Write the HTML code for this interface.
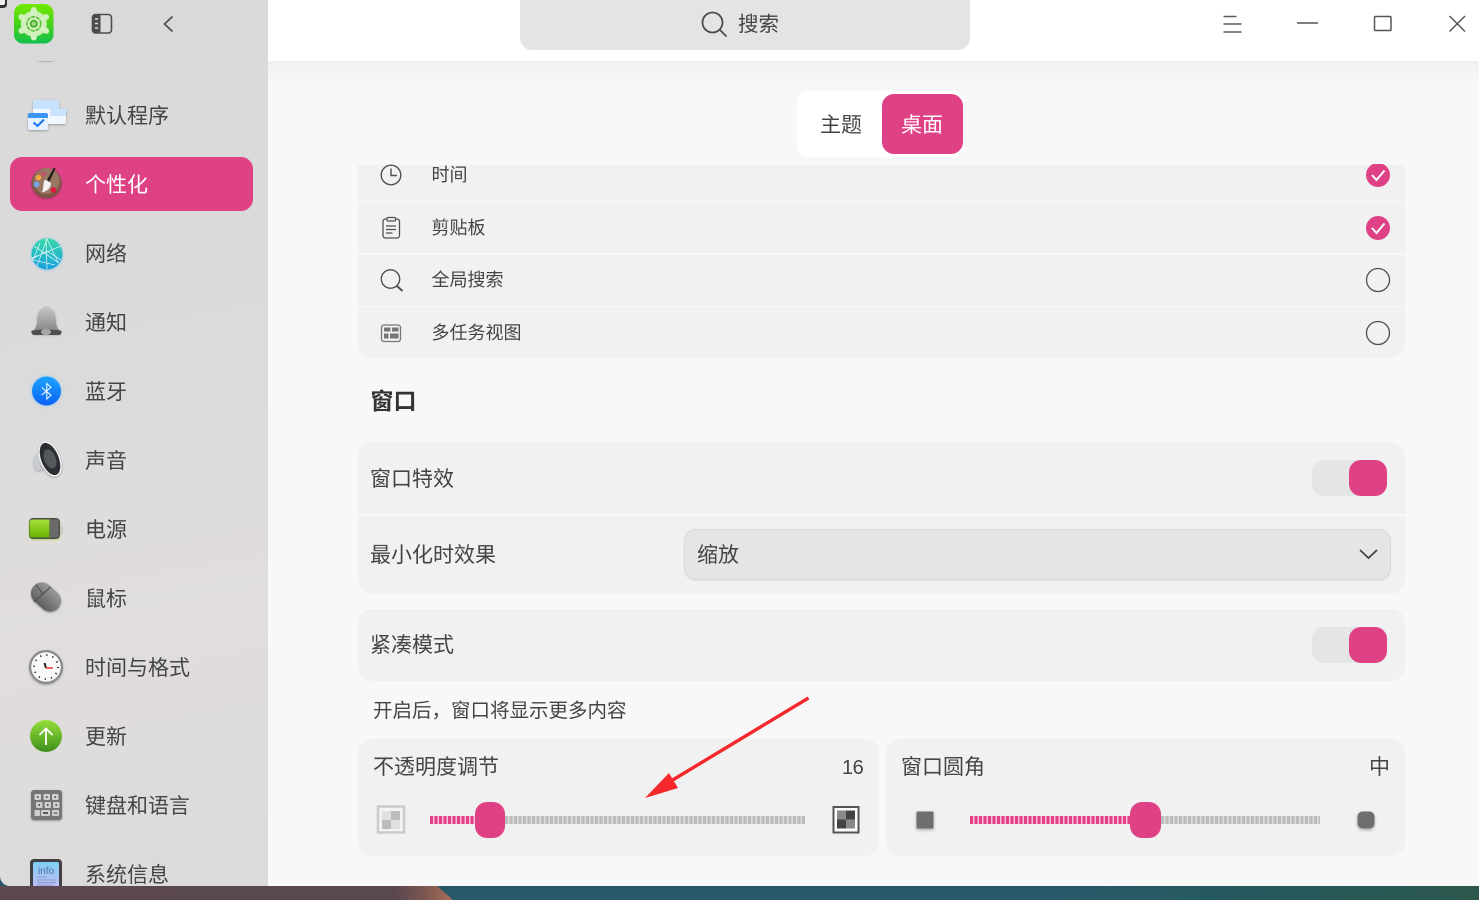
<!DOCTYPE html>
<html lang="zh"><head><meta charset="utf-8"><title>设置</title>
<style>
*{margin:0;padding:0;box-sizing:border-box}
html,body{width:1479px;height:900px;overflow:hidden;background:#28596b}
body{position:relative;font-family:"Liberation Sans","Noto Sans CJK SC",sans-serif;color:#444}
.a{position:absolute}
.t{position:absolute;white-space:nowrap;line-height:30px;height:30px}
.side{left:0;top:0;width:268px;height:886px;background:linear-gradient(170deg,#d9d9d9 0%,#dcdbdb 45%,#e1dddd 70%,#dcdada 100%);border-bottom-left-radius:10px;overflow:hidden}
.s{left:85px;font-size:21px;color:#444}
.main{left:268px;top:0;width:1211px;height:886px;background:#f8f8f8}
.panel{position:absolute;background:#f1f1f1}
.line{position:absolute;background:#f8f8f8}
.sw{position:absolute;left:1312px;width:75px;height:36px;background:#e5e5e5;border-radius:12px}
.sw i{position:absolute;right:0;top:0;width:38px;height:36px;background:#df4186;border-radius:12px}
.c{font-size:21px;color:#444}
.r{font-size:18px;color:#444;left:431.500px}
.tick{position:absolute;height:8px;top:816px}
.th{position:absolute;top:802px;height:36px;background:#df4186;border-radius:12px}
svg{position:absolute;overflow:visible}
</style></head><body>
<div class="a" style="left:0;top:886px;width:1479px;height:14px;background:linear-gradient(90deg,#5b4850 0%,#5a4850 395px,#7c5650 425px,#a86c58 450px)"></div>
<div class="a" style="left:0;top:886px;width:1479px;height:14px;clip-path:polygon(437px 0,100% 0,100% 100%,453px 100%);background:linear-gradient(90deg,#28596b 0%,#28596b 70%,#265a5e 85%,#2c574c 100%)"></div>

<div class="a side">
<div class="a" style="left:10px;top:157px;width:243px;height:54px;background:#de4285;border-radius:12px"></div>

<div class="t s" style="top:102px">默认程序</div>
<div class="t s" style="top:171px;color:#fff">个性化</div>
<div class="t s" style="top:240px">网络</div>
<div class="t s" style="top:309px">通知</div>
<div class="t s" style="top:378px">蓝牙</div>
<div class="t s" style="top:447px">声音</div>
<div class="t s" style="top:516px">电源</div>
<div class="t s" style="top:585px">鼠标</div>
<div class="t s" style="top:654px">时间与格式</div>
<div class="t s" style="top:723px">更新</div>
<div class="t s" style="top:792px">键盘和语言</div>
<div class="t s" style="top:861px">系统信息</div>

<svg width="268" height="886" viewBox="0 0 268 886" style="left:0;top:0">
<defs>
<linearGradient id="g1" x1="0" y1="0" x2="0" y2="1"><stop offset="0" stop-color="#72e800"/><stop offset=".6" stop-color="#3fcf20"/><stop offset="1" stop-color="#12c050"/></linearGradient>
<radialGradient id="gear" cx=".5" cy=".5" r=".5"><stop offset="0" stop-color="#e8f7d8"/><stop offset="1" stop-color="#c4edb0"/></radialGradient>
<linearGradient id="net" x1="0" y1="0" x2="0" y2="1"><stop offset="0" stop-color="#35d9a8"/><stop offset="1" stop-color="#1c9fe0"/></linearGradient>
<linearGradient id="bl" x1="0" y1="0" x2="0" y2="1"><stop offset="0" stop-color="#1fa4ff"/><stop offset="1" stop-color="#0a62f5"/></linearGradient>
<linearGradient id="bell" x1="0" y1="0" x2="0" y2="1"><stop offset="0" stop-color="#c8c8c8"/><stop offset="1" stop-color="#808080"/></linearGradient>
<linearGradient id="up" x1="0" y1="0" x2="0" y2="1"><stop offset="0" stop-color="#96df3c"/><stop offset="1" stop-color="#3d8f1c"/></linearGradient>
<linearGradient id="ms" x1="0" y1="0" x2="0" y2="1"><stop offset="0" stop-color="#9a9a9a"/><stop offset="1" stop-color="#5e5e5e"/></linearGradient>
<linearGradient id="inf" x1="0" y1="0" x2="0" y2="1"><stop offset="0" stop-color="#7fd0f5"/><stop offset="1" stop-color="#c4bcf5"/></linearGradient>
<linearGradient id="bat" x1="0" y1="0" x2="0" y2="1"><stop offset="0" stop-color="#a7df3c"/><stop offset="1" stop-color="#68b400"/></linearGradient>
<filter id="sh" x="-30%" y="-30%" width="160%" height="160%"><feDropShadow dx="0" dy="1" stdDeviation="1" flood-color="#000" flood-opacity=".3"/></filter>
<filter id="gb" x="-30%" y="-30%" width="160%" height="160%"><feDropShadow dx="0" dy="0" stdDeviation="1.500" flood-color="#3fb4ff" flood-opacity=".6"/></filter>
<filter id="gg" x="-30%" y="-30%" width="160%" height="160%"><feDropShadow dx="0" dy="1" stdDeviation="1" flood-color="#a8cf40" flood-opacity=".7"/></filter>
</defs>

<!-- app icon -->
<rect x="14" y="4" width="39.500" height="39.500" rx="9" fill="url(#g1)"/>
<g fill="url(#gear)"><circle cx="33.800" cy="23.800" r="13"/><g stroke="#d3f1bf" stroke-width="6" stroke-linecap="round"><path d="M33.800 10v27.500M21.500 17l24.600 13.800M21.500 30.800L46.100 17"/></g></g>
<circle cx="33.800" cy="23.800" r="7" fill="none" stroke="#58bf3a" stroke-width="1.600" stroke-dasharray="4 1"/>
<circle cx="33.800" cy="23.800" r="4" fill="#48b52c"/>
<circle cx="33.800" cy="23.800" r="2" fill="#9fdb84"/>
<!-- topleft corner -->
<path d="M0 0H7V4Q7 8 3 8H0Z" fill="#333"/>
<path d="M0 0H5V3Q5 5 3 5H0Z" fill="#eee"/>
<!-- sidebar toggle -->
<rect x="92.500" y="14.500" width="19" height="18.500" rx="3" fill="none" stroke="#4d4d4d" stroke-width="1.600"/>
<path d="M95 14.500h5.500v18.500H95a2.500 2.500 0 0 1-2.500-2.500V17a2.500 2.500 0 0 1 2.500-2.500z" fill="#4d4d4d"/>
<path d="M95 19h3M95 23.500h3M95 28h3" stroke="#ddd" stroke-width="1.600"/>
<!-- back -->
<path d="M172.500 16.500L164.500 24L172.500 31.500" fill="none" stroke="#4d4d4d" stroke-width="1.700"/>
<!-- partial scrolled icon -->
<path d="M36 61Q46 64 56 61Z" fill="#b5b5b5"/>

<!-- default apps -->
<g filter="url(#sh)">
<rect x="33" y="100" width="26" height="24" rx="2" fill="#f4f9ff"/><path d="M33 102a2 2 0 0 1 2-2h22a2 2 0 0 1 2 2v7H33z" fill="#c6e2fe"/>
<rect x="50" y="109" width="16" height="15" rx="2" fill="#f0f7ff"/><path d="M50 111a2 2 0 0 1 2-2h12a2 2 0 0 1 2 2v5H50z" fill="#c9e3fd"/>
<rect x="28" y="113" width="20" height="17" rx="2" fill="#e6f2ff"/><path d="M28 115a2 2 0 0 1 2-2h16a2 2 0 0 1 2 2v3H28z" fill="#3e95f4"/>
</g>
<path d="M33.500 122.500l4 3.500 6.500-6.500" fill="none" stroke="#1677ec" stroke-width="2"/>

<!-- palette -->
<g filter="url(#sh)"><circle cx="46.500" cy="183" r="15" fill="#7e5845"/></g>
<circle cx="46.500" cy="181" r="13" fill="#9a7764"/>
<circle cx="38.500" cy="177.500" r="2.800" fill="#f0a93c"/><circle cx="43.500" cy="174" r="2.800" fill="#b85a68"/><circle cx="36.500" cy="184.500" r="2.800" fill="#6fa8ef"/><circle cx="53.500" cy="190" r="2.800" fill="#e0143c"/>
<path d="M45 179.500l6 3.500c0 4.500-3.500 8.500-9.500 9.500 2.500-3 1-9.500 3.500-13z" fill="#f2f2f2"/>
<path d="M47 180l7-12.500 1.500 1-6 13z" fill="#1d1d1d"/>

<!-- network -->
<g filter="url(#gb)"><circle cx="47" cy="254" r="15.500" fill="url(#net)"/></g>
<g fill="none" stroke="#fff" stroke-width=".8" opacity=".8"><path d="M46 239l1 30M34 246l25 17M32 258l29-12M37 266l10-27 11 23M47 251l-15 8M47 251l14 9M40 243l-7 17 22 5"/></g>

<!-- bell -->
<g filter="url(#sh)"><path d="M46.500 306c2 0 2.500 1 2.500 1.800 5 1.500 6.500 6 6.800 12.500.2 5 1.200 8 4.700 11 .8 1.500-.5 2.700-3 2.700H35.500c-2.500 0-3.800-1.200-3-2.700 3.500-3 4.500-6 4.700-11 .3-6.500 1.800-11 6.800-12.500 0-.8.500-1.800 2.500-1.800z" fill="url(#bell)"/></g>
<path d="M31.500 331c3-2 27-2 30 0 .5 2.500-1 4-3 4H34.500c-2 0-3.500-1.500-3-4z" fill="#4f4f4f"/>
<ellipse cx="46" cy="332" rx="5" ry="3.200" fill="#a5a5a5"/>

<!-- bluetooth -->
<g filter="url(#gb)"><circle cx="46.500" cy="391" r="14.500" fill="url(#bl)"/></g>
<path d="M41.800 387.500l9.200 7.700-4.200 3.800v-15.500l4.200 3.800-9.200 7.700" fill="none" stroke="#fff" stroke-width="1"/>

<!-- speaker -->
<g filter="url(#sh)">
<ellipse cx="39" cy="462" rx="5.500" ry="8.500" fill="#c8ccd0"/>
<path d="M41 443L57 473L40 468Z" fill="#b9bcc0"/>
<ellipse cx="50" cy="459" rx="10" ry="18.500" transform="rotate(-22 50 459)" fill="#f4f4f4"/>
<ellipse cx="50" cy="459" rx="8.700" ry="17" transform="rotate(-22 50 459)" fill="#2a2d31"/>
<ellipse cx="50" cy="459" rx="5.700" ry="10" transform="rotate(-22 50 459)" fill="#55595d"/>
</g>

<!-- battery -->
<path d="M59 526h2a2 2 0 0 1 2 2v5a2 2 0 0 1-2 2h-2z" fill="#ccc"/>
<g filter="url(#gg)"><rect x="29" y="518" width="31" height="21" rx="4" fill="#4f4f4f"/></g>
<path d="M32.500 519.500h17v18h-17a3 3 0 0 1-3-3v-12a3 3 0 0 1 3-3z" fill="url(#bat)"/>
<path d="M50 519.500h6a2.500 2.500 0 0 1 2.500 2.500v13a2.500 2.500 0 0 1-2.500 2.500h-6z" fill="#6a6a6a"/>

<!-- mouse -->
<g filter="url(#sh)"><rect x="29.500" y="586" width="33" height="22" rx="11" transform="rotate(42 46 597)" fill="url(#ms)"/></g>
<path d="M33.800 602l17-15M36 585l7 9" stroke="#4a4a4a" stroke-width="1" fill="none"/>

<!-- clock -->
<g filter="url(#sh)"><circle cx="46" cy="667" r="17" fill="#8a8a8a"/></g>
<circle cx="46" cy="667" r="14.800" fill="#fafafa"/>
<circle cx="46" cy="667" r="12" fill="none" stroke="#333" stroke-width="2" stroke-dasharray="1.200 5.080"/>
<path d="M44.500 663l1.500 5" stroke="#222" stroke-width="2"/><path d="M46 668h7" stroke="#ef4444" stroke-width="1.600"/>

<!-- update -->
<circle cx="46" cy="736" r="16" fill="url(#up)"/>
<path d="M46 745V729M39.500 735l6.500-6.500 6.500 6.500" stroke="#fff" stroke-width="1.800" fill="none"/>

<!-- keyboard -->
<g filter="url(#sh)"><rect x="31" y="790" width="31" height="30" rx="3" fill="#757575"/></g>
<g fill="#cfcfcf">
<rect x="34.500" y="794" width="6.500" height="6" rx="1"/><rect x="43.500" y="794" width="6.500" height="6" rx="1"/><rect x="52" y="794" width="6.500" height="6" rx="1"/>
<rect x="36" y="802" width="6.500" height="6" rx="1"/><rect x="44.500" y="802" width="6.500" height="6" rx="1"/><rect x="53" y="802" width="6.500" height="6" rx="1"/>
<rect x="34.500" y="810" width="5.500" height="6" rx="1"/><rect x="41" y="810" width="9" height="6" rx="1"/><rect x="52" y="810" width="7" height="6" rx="1"/></g>
<g fill="#5a5a5a"><rect x="37" y="796" width="1.500" height="2"/><rect x="46" y="796" width="1.500" height="2"/><rect x="54.500" y="796" width="1.500" height="2"/><rect x="38.500" y="804" width="1.500" height="2"/><rect x="47" y="804" width="1.500" height="2"/><rect x="55.500" y="804" width="1.500" height="2"/><rect x="43" y="812" width="5" height="2"/><rect x="53.500" y="812.500" width="4" height="1.200"/></g>

<!-- info -->
<rect x="30" y="859" width="32" height="30" rx="4" fill="#3f3f45"/>
<rect x="33" y="862" width="26" height="26" rx="2" fill="url(#inf)"/>
<text x="46" y="874" font-size="10" fill="#53719c" text-anchor="middle" font-family="Liberation Sans">info</text>
<path d="M37 877h10M37 880h19M37 882.500h19M37 885h16" stroke="#7e8fc0" stroke-width=".8"/>
</svg>
</div>

<div class="a main" style="background:linear-gradient(#f0f0f0 61px,#f8f8f8 85px)"></div>
<div class="a" style="left:268px;top:0;width:1211px;height:61px;background:#fff"></div>
<div class="a" style="left:520px;top:0;width:450px;height:50px;background:#e4e4e4;border-radius:0 0 12px 12px"></div>
<div class="t" style="left:738px;top:10px;font-size:20.500px;color:#444">搜索</div>

<div class="a" style="left:797px;top:91px;width:166px;height:66px;background:#fff;border-radius:12px"></div>
<div class="a" style="left:881.500px;top:94px;width:81px;height:60px;background:#df4186;border-radius:12px"></div>
<div class="t" style="left:820px;top:111px;font-size:21px;color:#444">主题</div>
<div class="t" style="left:901px;top:111px;font-size:21px;color:#fff">桌面</div>

<!-- list panel -->
<div class="panel" style="left:358px;top:165px;width:1047px;height:193px;border-radius:0 0 14px 14px"></div>
<div class="line" style="left:358px;top:201px;width:1047px;height:1px"></div>
<div class="line" style="left:358px;top:253px;width:1047px;height:2px"></div>
<div class="line" style="left:358px;top:306px;width:1047px;height:1px"></div>
<div class="t r" style="top:160px">时间</div>
<div class="t r" style="top:213px">剪贴板</div>
<div class="t r" style="top:265px">全局搜索</div>
<div class="t r" style="top:318px">多任务视图</div>

<div class="t" style="left:370.500px;top:386px;font-size:23px;font-weight:700;color:#333">窗口</div>

<!-- window panel -->
<div class="panel" style="left:358px;top:442px;width:1047px;height:152px;border-radius:14px"></div>
<div class="line" style="left:358px;top:514px;width:1047px;height:2px"></div>
<div class="t c" style="left:370px;top:465px">窗口特效</div>
<div class="sw" style="top:460px"><i></i></div>
<div class="t c" style="left:370px;top:541px">最小化时效果</div>
<div class="a" style="left:684px;top:529px;width:707px;height:51px;background:#e5e5e5;border-radius:12px;border:1px solid #d8d8d8;box-shadow:0 1px 1px #e2e2e2"></div>
<div class="t c" style="left:697px;top:541px">缩放</div>

<div class="panel" style="left:358px;top:609px;width:1047px;height:72px;border-radius:14px"></div>
<div class="t c" style="left:370px;top:631px">紧凑模式</div>
<div class="sw" style="top:627px"><i></i></div>

<div class="t" style="left:373px;top:696px;font-size:19.500px;color:#444">开启后，窗口将显示更多内容</div>

<div class="panel" style="left:358px;top:739px;width:520.500px;height:117px;border-radius:14px"></div>
<div class="panel" style="left:886px;top:739px;width:519px;height:117px;border-radius:14px"></div>
<div class="t c" style="left:373px;top:753px">不透明度调节</div>
<div class="t c" style="left:842px;top:753px;font-size:20px;letter-spacing:-.5px">16</div>
<div class="t c" style="left:901px;top:753px">窗口圆角</div>
<div class="t c" style="left:1369px;top:753px">中</div>

<div class="tick" style="left:430px;width:45px;background:repeating-linear-gradient(90deg,#e04187 0 3px,#f6c0d8 3px 4.500px)"></div>
<div class="tick" style="left:505px;width:300px;background:repeating-linear-gradient(90deg,#bcbcbc 0 3px,#dedede 3px 4.500px)"></div>
<div class="th" style="left:475px;width:30px"></div>
<div class="tick" style="left:970px;width:160px;background:repeating-linear-gradient(90deg,#e04187 0 3px,#f6c0d8 3px 4.500px)"></div>
<div class="tick" style="left:1161px;width:159px;background:repeating-linear-gradient(90deg,#bcbcbc 0 3px,#dedede 3px 4.500px)"></div>
<div class="th" style="left:1130px;width:31px"></div>

<svg width="1479" height="900" viewBox="0 0 1479 900" style="left:0;top:0">
<defs><filter id="s2" x="-40%" y="-40%" width="180%" height="180%"><feDropShadow dx="0" dy="1.500" stdDeviation="1.500" flood-color="#000" flood-opacity=".3"/></filter></defs>
<!-- titlebar -->
<circle cx="712.500" cy="22.500" r="10" fill="none" stroke="#4d4d4d" stroke-width="1.800"/>
<path d="M720 30l6.500 6.500" stroke="#4d4d4d" stroke-width="1.800"/>
<path d="M1223.500 16.500h13M1223.500 24h18M1223.500 32h18" stroke="#5a5a5a" stroke-width="1.500" fill="none"/>
<path d="M1297 23h21" stroke="#555" stroke-width="1.500"/>
<rect x="1374.500" y="16.500" width="16.500" height="14" rx="1" fill="none" stroke="#555" stroke-width="1.500"/>
<path d="M1449.500 16l15.500 15.500M1465 16l-15.500 15.500" stroke="#555" stroke-width="1.500"/>

<!-- list icons -->
<circle cx="391" cy="175" r="9.800" fill="none" stroke="#4f4f4f" stroke-width="1.400"/>
<path d="M391 168.500v7h6" fill="none" stroke="#4f4f4f" stroke-width="1.400"/>
<rect x="383" y="219" width="16.500" height="19" rx="2.500" fill="none" stroke="#4f4f4f" stroke-width="1.300"/>
<rect x="387" y="217.500" width="8.500" height="3.500" rx="1" fill="#f1f1f1" stroke="#4f4f4f" stroke-width="1.200"/>
<path d="M386 226h10M386 229.500h10M386 233h6.500" stroke="#4f4f4f" stroke-width="1.200"/>
<circle cx="390.500" cy="279" r="9.200" fill="none" stroke="#4f4f4f" stroke-width="1.400"/>
<path d="M397 286l5.500 5" stroke="#4f4f4f" stroke-width="2"/>
<rect x="381.500" y="325" width="19" height="16.500" rx="2.500" fill="none" stroke="#777" stroke-width="1.300"/>
<rect x="384" y="327.500" width="6.500" height="4" fill="#777"/><rect x="392" y="327.500" width="6.500" height="4" fill="#777"/>
<rect x="384" y="333.500" width="4.500" height="5" fill="#777"/><rect x="390" y="333.500" width="8.500" height="5" fill="#777"/>

<!-- checks -->
<clipPath id="clp"><rect x="1360" y="164" width="40" height="30"/></clipPath>
<circle cx="1378" cy="175" r="12" fill="#df4186" clip-path="url(#clp)"/>
<path d="M1372 175l4.500 5 8-9.500" fill="none" stroke="#fff" stroke-width="2"/>
<circle cx="1378" cy="228" r="12" fill="#df4186"/>
<path d="M1372 228l4.500 5 8-9.500" fill="none" stroke="#fff" stroke-width="2"/>
<circle cx="1378" cy="280" r="11.500" fill="none" stroke="#505050" stroke-width="1.300"/>
<circle cx="1378" cy="333" r="11.500" fill="none" stroke="#505050" stroke-width="1.300"/>

<!-- dropdown chevron -->
<path d="M1360 550l8.500 8 8.500-8" fill="none" stroke="#444" stroke-width="1.800"/>

<!-- opacity icons -->
<rect x="378" y="806.500" width="26" height="26" fill="#f3f3f3" stroke="#cacaca" stroke-width="2.500"/>
<rect x="382" y="811" width="9" height="9" fill="#e0e0e0"/><rect x="391" y="811" width="9" height="9" fill="#bcbcbc"/><rect x="382" y="820" width="9" height="9" fill="#bcbcbc"/><rect x="391" y="820" width="9" height="9" fill="#e0e0e0"/>
<rect x="833.500" y="807" width="25" height="25.500" fill="#fff" stroke="#555" stroke-width="2"/>
<rect x="837" y="810.500" width="9" height="9" fill="#8a8a8a"/><rect x="846" y="810.500" width="9" height="9" fill="#444"/><rect x="837" y="819.500" width="9" height="9" fill="#444"/><rect x="846" y="819.500" width="9" height="9" fill="#8a8a8a"/>
<rect x="916.500" y="811.500" width="17" height="17" fill="#6e6e6e" filter="url(#s2)"/>
<rect x="1357.500" y="811.500" width="17" height="17" rx="5" fill="#6e6e6e" filter="url(#s2)"/>

<!-- red arrow -->
<path d="M808.500 698L671 781" stroke="#f5282c" stroke-width="3.400" fill="none"/>
<path d="M645 798L669 773L678 788Z" fill="#f5282c"/>
</svg>
</body></html>
